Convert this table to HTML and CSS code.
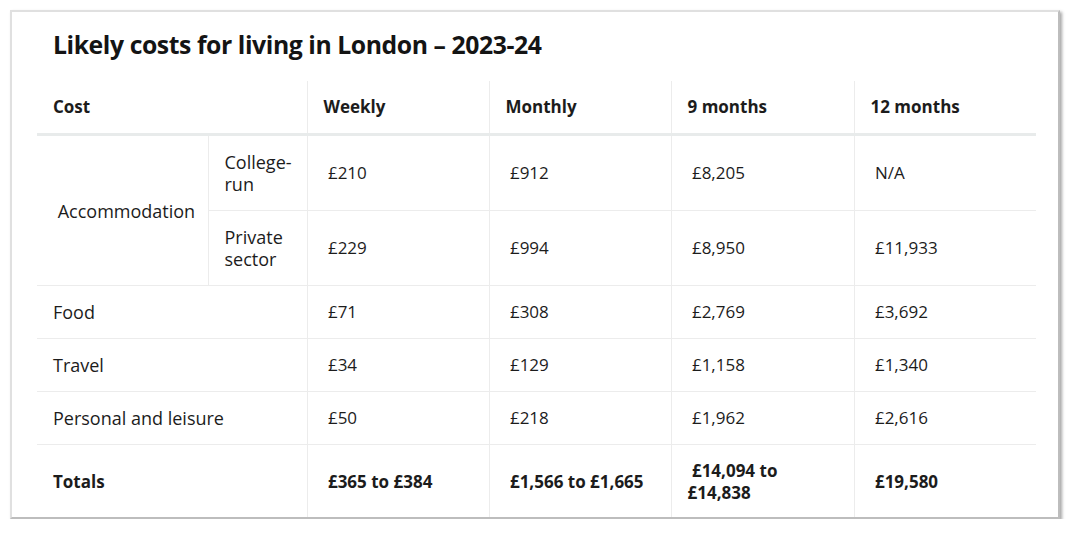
FILE: index.html
```html
<!DOCTYPE html>
<html lang="en">
<head>
<meta charset="utf-8">
<title>Likely costs for living in London</title>
<link rel="stylesheet" href="styles.css">
</head>
<body>
<div class="card">
  <h2 class="title">Likely costs for living in London – 2023-24</h2>
  <table class="costs">
    <colgroup>
      <col class="c1"><col class="c2"><col class="c3"><col class="c4"><col class="c5"><col class="c6">
    </colgroup>
    <thead>
      <tr>
        <th colspan="2">Cost</th>
        <th>Weekly</th>
        <th>Monthly</th>
        <th>9 months</th>
        <th>12 months</th>
      </tr>
    </thead>
    <tbody>
      <tr class="tall">
        <td rowspan="2" class="group label">&nbsp;Accommodation</td>
        <td class="sub label">College-run</td>
        <td>&nbsp;£210</td>
        <td>&nbsp;£912</td>
        <td>&nbsp;£8,205</td>
        <td>&nbsp;N/A</td>
      </tr>
      <tr class="tall">
        <td class="sub label">Private sector</td>
        <td>&nbsp;£229</td>
        <td>&nbsp;£994</td>
        <td>&nbsp;£8,950</td>
        <td>&nbsp;£11,933</td>
      </tr>
      <tr>
        <td colspan="2" class="first label">Food</td>
        <td>&nbsp;£71</td>
        <td>&nbsp;£308</td>
        <td>&nbsp;£2,769</td>
        <td>&nbsp;£3,692</td>
      </tr>
      <tr>
        <td colspan="2" class="first label">Travel</td>
        <td>&nbsp;£34</td>
        <td>&nbsp;£129</td>
        <td>&nbsp;£1,158</td>
        <td>&nbsp;£1,340</td>
      </tr>
      <tr>
        <td colspan="2" class="first label">Personal and leisure</td>
        <td>&nbsp;£50</td>
        <td>&nbsp;£218</td>
        <td>&nbsp;£1,962</td>
        <td>&nbsp;£2,616</td>
      </tr>
      <tr class="tall totals">
        <td colspan="2" class="first">Totals</td>
        <td>&nbsp;£365 to £384</td>
        <td>&nbsp;£1,566 to £1,665</td>
        <td>&nbsp;£14,094 to £14,838</td>
        <td>&nbsp;£19,580</td>
      </tr>
    </tbody>
  </table>
</div>
</body>
</html>
```

FILE: styles.css
```css
html, body {
  margin: 0;
  padding: 0;
  background: #ffffff;
}

body {
  font-family: "Open Sans", "Noto Sans", sans-serif;
  color: #1c1c1c;
}

.card {
  box-sizing: border-box;
  width: 1050px;
  height: 509px;
  margin: 10px 0 0 10px;
  padding: 0 22px 0 25px;
  border: 2px solid #e0e0e0;
  border-bottom-color: #bdbdbd;
  border-right-color: #bdbdbd;
  box-shadow: 2px 2px 3px rgba(0, 0, 0, 0.35);
  background: #fff;
  display: flex;
  flex-direction: column;
  overflow: hidden;
}

.title {
  margin: 0;
  padding: 16px 0 0 16px;
  height: 50px;
  flex: none;
  box-sizing: border-box;
  font-size: 24.75px;
  font-weight: 700;
  line-height: 34px;
  letter-spacing: -0.42px;
  color: #141414;
}

.costs {
  width: 999px;
  margin-top: 19px;
  border-collapse: collapse;
  table-layout: fixed;
  font-size: 17px;
  flex: none;
}

.c1 { width: 171px; }
.c2 { width: 99px; }
.c3 { width: 182px; }
.c4 { width: 182px; }
.c5 { width: 183px; }
.c6 { width: 182px; }

.costs th,
.costs td {
  padding: 0 16px;
  text-align: left;
  vertical-align: middle;
  border-left: 1px solid #ececec;
  line-height: 22px;
}

.costs th:first-child,
.costs td.group,
.costs td.first {
  border-left: none;
}

.costs th {
  height: 52px;
  font-weight: 700;
  border-bottom: 3px solid #e8ebeb;
}

.costs td {
  height: 52px;
  border-top: 1px solid #ececec;
}

.costs td.label {
  font-size: 18px;
}

.costs tbody tr:first-child td {
  border-top: none;
}

.costs tr.tall td {
  height: 74px;
}

.costs td.sub {
  padding-right: 8px;
}

.totals td {
  font-weight: 700;
}
```
